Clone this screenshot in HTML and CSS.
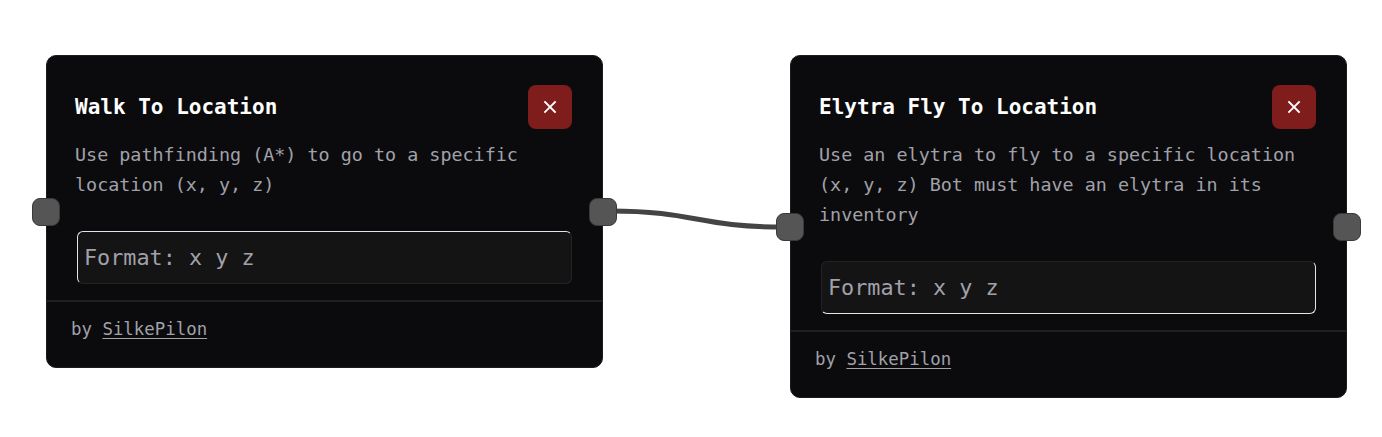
FILE: index.html
```html
<!DOCTYPE html>
<html lang="en">
<head>
<meta charset="utf-8">
<title>Flow</title>
<link rel="stylesheet" href="styles.css">
</head>
<body>
<div class="canvas">
  <svg class="edges" width="1382" height="437" viewBox="0 0 1382 437">
    <path d="M 610 211 C 696 211, 697 227, 783 227" class="edge"/>
  </svg>

  <div class="node node-a">
    <span class="handle handle-in"></span>
    <div class="node-body">
      <div class="node-head">
        <h2 class="node-title">Walk To Location</h2>
        <button class="close" aria-label="Remove">
          <svg width="14" height="14" viewBox="0 0 14 14"><path d="M2 2 L12 12 M12 2 L2 12" stroke="#fff" stroke-width="1.8" stroke-linecap="square"/></svg>
        </button>
      </div>
      <p class="node-desc">Use pathfinding (A*) to go to a specific location (x, y, z)</p>
      <div class="field field-a">Format: x y z</div>
    </div>
    <div class="node-foot">by <a href="#">SilkePilon</a></div>
    <span class="handle handle-out"></span>
  </div>

  <div class="node node-b">
    <span class="handle handle-in"></span>
    <div class="node-body">
      <div class="node-head">
        <h2 class="node-title">Elytra Fly To Location</h2>
        <button class="close" aria-label="Remove">
          <svg width="14" height="14" viewBox="0 0 14 14"><path d="M2 2 L12 12 M12 2 L2 12" stroke="#fff" stroke-width="1.8" stroke-linecap="square"/></svg>
        </button>
      </div>
      <p class="node-desc">Use an elytra to fly to a specific location (x, y, z) Bot must have an elytra in its inventory</p>
      <div class="field field-b">Format: x y z</div>
    </div>
    <div class="node-foot">by <a href="#">SilkePilon</a></div>
    <span class="handle handle-out"></span>
  </div>
</div>
</body>
</html>
```

FILE: styles.css
```css
* { box-sizing: border-box; }
html, body { margin: 0; padding: 0; background: #ffffff; }
body { font-family: "DejaVu Sans Mono", "Liberation Mono", monospace; }

.canvas { position: relative; width: 1382px; height: 437px; overflow: hidden; }

.edges { position: absolute; left: 0; top: 0; }
.edge { fill: none; stroke: #444444; stroke-width: 5; }

.node {
  position: absolute;
  top: 55px;
  width: 557px;
  background: #0b0b0d;
  border: 1px solid #1c1c1f;
  border-radius: 10px;
}
.node-a { left: 46px; }
.node-b { left: 790px; }

.node-body { padding: 29px 30px 16px 28px; }

.node-head {
  display: flex;
  align-items: center;
  justify-content: space-between;
  height: 44px;
}
.node-title {
  margin: 0;
  font-size: 21px;
  font-weight: bold;
  color: #ffffff;
  letter-spacing: 0;
}
.close {
  width: 44px;
  height: 44px;
  border: none;
  border-radius: 8px;
  background: #7f1d1d;
  display: flex;
  align-items: center;
  justify-content: center;
  padding: 0;
}

.node-desc {
  margin: 11px 0 0 0;
  font-size: 18.4px;
  line-height: 30px;
  color: #a1a1aa;
}

.field {
  margin: 31px 0 0 2px;
  height: 53px;
  background: #141414;
  border-radius: 6px;
  border: 1px solid #232326;
  padding-left: 6px;
  display: flex;
  align-items: center;
  font-size: 21.8px;
  color: #a1a1aa;
}
.field-a { border-top-color: #e5e5e5; border-left-color: #e5e5e5; }
.field-b { border-bottom-color: #e5e5e5; border-right-color: #e5e5e5; }

.node-foot {
  border-top: 2px solid #202023;
  padding: 15px 26px 26px 24px;
  font-size: 17.4px;
  line-height: 24px;
  color: #a1a1aa;
}
.node-foot a { color: #a1a1aa; text-decoration: underline; text-underline-offset: 3px; }

.handle {
  position: absolute;
  top: 50%;
  width: 28px;
  height: 28px;
  margin-top: -14px;
  background: #555555;
  border: 1px solid #3a3a3a;
  border-radius: 8px;
}
.handle-in { left: -15px; }
.handle-out { right: -15px; }
```
